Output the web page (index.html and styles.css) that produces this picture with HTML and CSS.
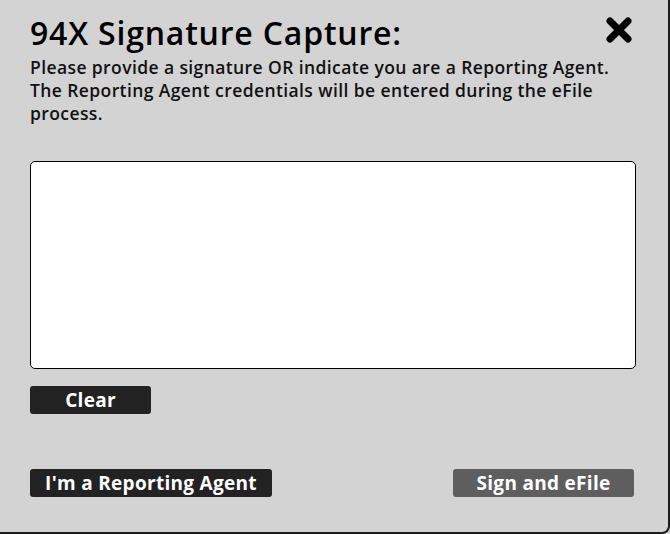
FILE: index.html
```html
<!DOCTYPE html>
<html>
<head>
<meta charset="utf-8">
<link rel="stylesheet" href="styles.css">
</head>
<body>
<div class="dialog">
  <div class="header">
    <h1 class="title">94X Signature Capture:</h1>
    <button class="close" aria-label="Close">
      <svg width="26" height="26" viewBox="0 0 26 26"><path d="M4 4 L22 22 M22 4 L4 22" stroke="#000" stroke-width="7" stroke-linecap="round"/></svg>
    </button>
  </div>
  <p class="intro">Please provide a signature OR indicate you are a Reporting Agent.<br>The Reporting Agent credentials will be entered during the eFile process.</p>
  <div class="pad"></div>
  <div class="row">
    <button class="btn btn-dark btn-clear">Clear</button>
  </div>
  <div class="row actions">
    <button class="btn btn-dark btn-agent">I'm a Reporting Agent</button>
    <button class="btn btn-gray btn-sign">Sign and eFile</button>
  </div>
</div>
</body>
</html>
```
FILE: styles.css
```css
html, body {
  margin: 0;
  padding: 0;
  background: #d3d3d3;
}
.dialog {
  width: 670px;
  height: 534px;
  box-sizing: border-box;
  background: #d3d3d3;
  border-right: 2px solid #1c1c1c;
  border-bottom: 2px solid #1c1c1c;
  border-bottom-right-radius: 8px;
  padding: 13px 32px 0 30px;
  font-family: "Open Sans", "Liberation Sans", sans-serif;
  color: #000;
}
.header {
  display: flex;
  justify-content: space-between;
  align-items: flex-start;
}
.title {
  margin: 0;
  font-size: 32px;
  font-weight: 600;
  line-height: 40px;
  letter-spacing: 0.8px;
  color: #000;
}
.close {
  margin: 4px 4px 0 0;
  padding: 0;
  border: 0;
  background: none;
  width: 26px;
  height: 26px;
  display: block;
}
.close svg { display: block; }
.intro {
  margin: 3px 0 0 0;
  font-size: 17.5px;
  font-weight: 600;
  line-height: 23px;
  letter-spacing: 0.4px;
  color: #111;
}
.pad {
  margin-top: 36px;
  height: 206px;
  background: #fff;
  border: 1px solid #000;
  border-radius: 5px;
}
.row {
  display: flex;
  justify-content: space-between;
  margin-top: 17px;
}
.actions {
  margin-top: 55px;
  padding-right: 2px;
}
.btn {
  font-family: "Open Sans", "Liberation Sans", sans-serif;
  font-size: 19px;
  font-weight: 700;
  letter-spacing: 0.3px;
  color: #fff;
  height: 28px;
  line-height: 28px;
  border: 0;
  border-radius: 3px;
  padding: 0;
  text-align: center;
  display: block;
}
.btn-dark { background: #222; }
.btn-gray { background: #5e5e5e; }
.btn-clear { width: 121px; }
.btn-agent { width: 242px; }
.btn-sign { width: 181px; }
```
